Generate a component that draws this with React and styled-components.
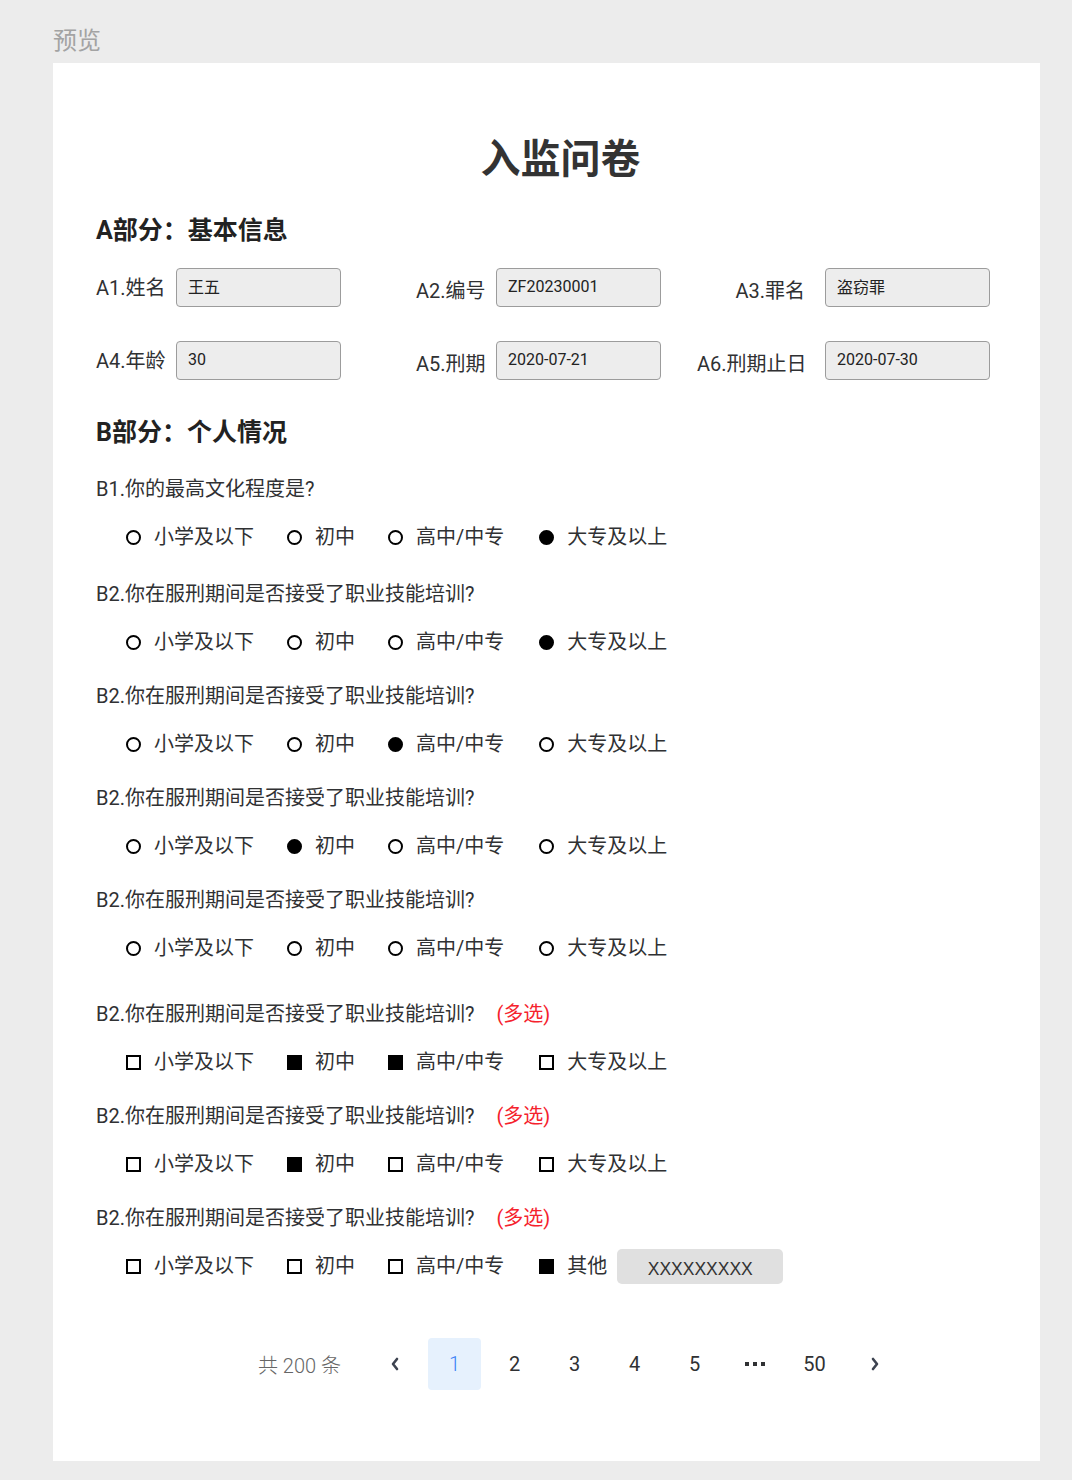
import React from "react";
import styled, { createGlobalStyle } from "styled-components";

const GlobalStyle = createGlobalStyle`
  html, body {
    margin: 0;
    padding: 0;
    background: #ececec;
  }
  body {
    font-family: Roboto, "Noto Sans CJK SC", sans-serif;
    color: #303133;
  }
  * {
    box-sizing: border-box;
  }
`;

const Page = styled.div`
  padding: 0 32px 20px 53px;
  background: #ececec;
  min-height: 1480px;
`;

const PageLabel = styled.div`
  height: 63px;
  padding-top: 26px;
  font-size: 24px;
  line-height: 30px;
  color: #a3a3a3;
`;

const Card = styled.div`
  background: #fff;
  padding: 69px 50px 71px 43px;
`;

const Title = styled.h1`
  margin: 0;
  text-align: center;
  font-size: 40px;
  line-height: 56px;
  font-weight: 700;
  color: #333;
  padding-left: 35px;
`;

const Section = styled.h2`
  margin: ${(p) => p.$top}px 0 0;
  font-size: 25px;
  line-height: 34px;
  font-weight: 700;
  color: #222;
`;

const FieldGrid = styled.div`
  display: grid;
  grid-template-columns: 320px 281px auto;
  row-gap: 34px;
  margin-top: 20px;
`;

const Field = styled.div`
  display: flex;
  align-items: center;
`;

const FieldLabel = styled.span`
  width: ${(p) => p.$width}px;
  flex-shrink: 0;
  font-size: 20px;
  line-height: 28px;
  text-align: ${(p) => (p.$right ? "right" : "left")};
  padding-right: ${(p) => (p.$right ? 20 : 0)}px;
  padding-top: ${(p) => (p.$drop ? 6 : 0)}px;
  white-space: nowrap;
`;

const FieldBox = styled.div`
  width: 165px;
  height: 39px;
  border: 1.5px solid #9c9c9c;
  border-radius: 4px;
  background: #ededed;
  padding: 0 11px 3px;
  display: flex;
  align-items: center;
  font-size: 16px;
  color: #222;
`;

const QuestionBlock = styled.div`
  margin-top: ${(p) => p.$top}px;
`;

const Question = styled.div`
  font-size: 20px;
  line-height: 28px;
  white-space: nowrap;
`;

const Multi = styled.span`
  color: #f5222d;
  margin-left: 22px;
`;

const OptionRow = styled.div`
  display: flex;
  align-items: center;
  gap: 33px;
  margin-top: 20px;
  padding-left: 30px;
  height: 28px;
`;

const Option = styled.label`
  display: flex;
  align-items: center;
  gap: 13px;
  font-size: 20px;
  line-height: 28px;
  white-space: nowrap;
  &:last-of-type {
    margin-left: 2px;
  }
`;

const Mark = styled.span`
  width: 15px;
  height: 15px;
  flex-shrink: 0;
  border: 2px solid #000;
  border-radius: ${(p) => (p.$round ? "50%" : "0")};
  background: ${(p) => (p.$on ? "#000" : "#fff")};
`;

const OtherBox = styled.div`
  width: 166px;
  height: 35px;
  margin-left: -23px;
  border-radius: 5px;
  background: #e0e0e0;
  display: flex;
  align-items: center;
  justify-content: center;
  padding-top: 6px;
  font-family: "Liberation Sans", Arial, sans-serif;
  font-size: 17.5px;
  color: #333;
`;

const Pager = styled.div`
  display: flex;
  align-items: center;
  margin: 58px 0 0 162px;
`;

const Total = styled.span`
  font-size: 20px;
  font-weight: 300;
  color: #666;
  margin-right: 27px;
  white-space: nowrap;
`;

const PageItem = styled.div`
  width: 53px;
  height: 52px;
  margin-right: 7px;
  border-radius: 4px;
  display: flex;
  align-items: center;
  justify-content: center;
  font-size: 20px;
  font-weight: ${(p) => (p.$active ? 300 : 400)};
  color: ${(p) => (p.$active ? "#3b82f6" : "#303133")};
  background: ${(p) => (p.$active ? "#e6f1fd" : "transparent")};
`;

const Chevron = ({ dir }) => (
  <svg width="10" height="14" viewBox="0 0 10 14">
    <path
      d={dir === "left" ? "M7 2 L3 7 L7 12" : "M3 2 L7 7 L3 12"}
      fill="none"
      stroke="#3d4350"
      strokeWidth="2.6"
      strokeLinecap="round"
      strokeLinejoin="round"
    />
  </svg>
);

const Dots = () => (
  <svg width="22" height="6" viewBox="0 0 22 6">
    <rect x="1" y="1" width="4" height="4" fill="#303133" />
    <rect x="9" y="1" width="4" height="4" fill="#303133" />
    <rect x="17" y="1" width="4" height="4" fill="#303133" />
  </svg>
);

const fields = [
  { label: "A1.姓名", value: "王五", width: 80 },
  { label: "A2.编号", value: "ZF20230001", width: 80, drop: true },
  { label: "A3.罪名", value: "盗窃罪", width: 128, drop: true, right: true },
  { label: "A4.年龄", value: "30", width: 80 },
  { label: "A5.刑期", value: "2020-07-21", width: 80, drop: true },
  { label: "A6.刑期止日", value: "2020-07-30", width: 128, drop: true, right: true },
];

const levels = ["小学及以下", "初中", "高中/中专", "大专及以上"];
const training = "B2.你在服刑期间是否接受了职业技能培训?";

const questions = [
  { title: "B1.你的最高文化程度是?", picked: [3] },
  { title: training, picked: [3] },
  { title: training, picked: [2] },
  { title: training, picked: [1] },
  { title: training, picked: [] },
  { title: training, picked: [1, 2], multi: true },
  { title: training, picked: [1], multi: true },
  { title: training, picked: [3], multi: true, other: true },
];

const blockGap = [25, 29, 26, 26, 26, 38, 26, 26];

function QuestionItem({ q, top }) {
  const opts = q.other ? [...levels.slice(0, 3), "其他"] : levels;
  return (
    <QuestionBlock $top={top}>
      <Question>
        {q.title}
        {q.multi && <Multi>(多选)</Multi>}
      </Question>
      <OptionRow>
        {opts.map((o, i) => (
          <Option key={o}>
            <Mark $round={!q.multi} $on={q.picked.includes(i)} />
            {o}
          </Option>
        ))}
        {q.other && <OtherBox>XXXXXXXXX</OtherBox>}
      </OptionRow>
    </QuestionBlock>
  );
}

export default function App() {
  return (
    <Page>
      <GlobalStyle />
      <PageLabel>预览</PageLabel>
      <Card>
        <Title>入监问卷</Title>

        <Section $top={26}>A部分：基本信息</Section>
        <FieldGrid>
          {fields.map((f) => (
            <Field key={f.label}>
              <FieldLabel $width={f.width} $drop={f.drop} $right={f.right}>
                {f.label}
              </FieldLabel>
              <FieldBox>{f.value}</FieldBox>
            </Field>
          ))}
        </FieldGrid>

        <Section $top={36}>B部分：个人情况</Section>
        {questions.map((q, i) => (
          <QuestionItem key={i} q={q} top={blockGap[i]} />
        ))}

        <Pager>
          <Total>共 200 条</Total>
          <PageItem>
            <Chevron dir="left" />
          </PageItem>
          <PageItem $active>1</PageItem>
          <PageItem>2</PageItem>
          <PageItem>3</PageItem>
          <PageItem>4</PageItem>
          <PageItem>5</PageItem>
          <PageItem>
            <Dots />
          </PageItem>
          <PageItem>50</PageItem>
          <PageItem>
            <Chevron dir="right" />
          </PageItem>
        </Pager>
      </Card>
    </Page>
  );
}
